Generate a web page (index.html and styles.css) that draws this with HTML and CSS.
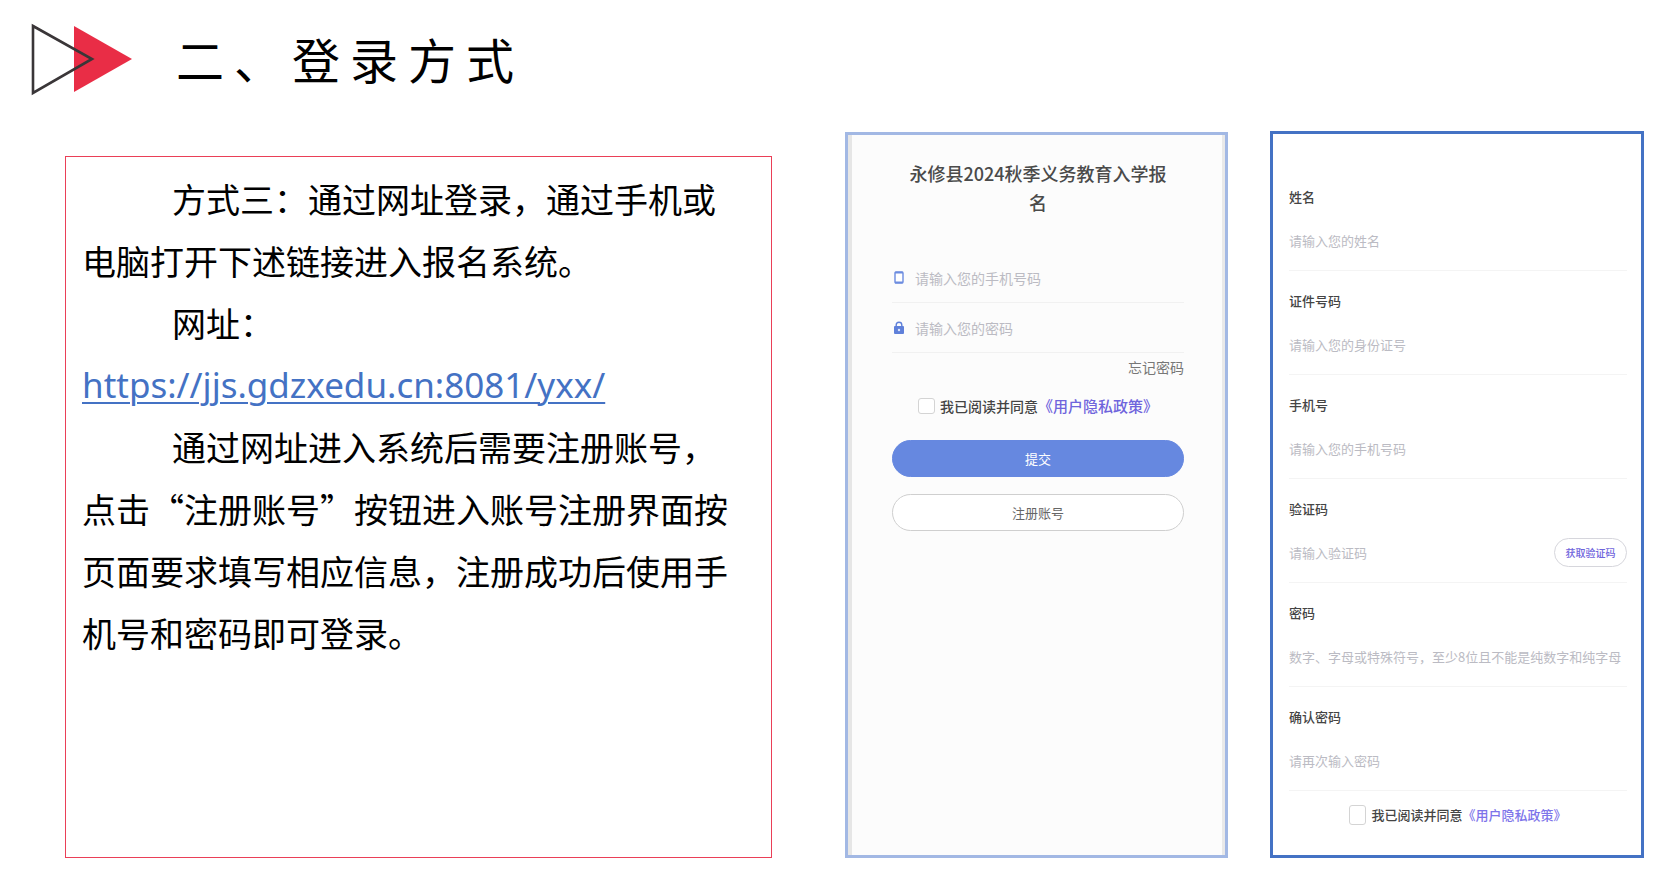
FILE: index.html
```html
<!DOCTYPE html>
<html lang="zh-CN">
<head>
<meta charset="utf-8">
<meta name="viewport" content="width=device-width, initial-scale=1">
<title>二、登录方式</title>
<link rel="stylesheet" href="styles.css">
</head>
<body>
<div class="page">
  <header class="header">
    <svg class="mark" width="104" height="76" viewBox="0 0 104 76" aria-hidden="true">
      <path d="M44 6 L102 39 L44 72 Z" fill="#e92d46"/>
      <path d="M3 6 L62 39 L3 73 Z" fill="none" stroke="#3a3638" stroke-width="2.6"/>
    </svg>
    <h1 class="title">二、登录方式</h1>
  </header>
  <main class="columns">
    <section class="note">
      <p>方式三：通过网址登录，通过手机或电脑打开下述链接进入报名系统。</p>
      <p>网址：</p>
      <a class="url" href="https://jjs.gdzxedu.cn:8081/yxx/">https://jjs.gdzxedu.cn:8081/yxx/</a>
      <p>通过网址进入系统后需要注册账号，点击“注册账号”按钮进入账号注册界面按页面要求填写相应信息，注册成功后使用手机号和密码即可登录。</p>
    </section>

    <form class="login">
      <h2 class="login-title">永修县2024秋季义务教育入学报名</h2>
      <div class="login-row">
        <svg width="14" height="16" viewBox="0 0 14 16" aria-hidden="true"><rect x="3" y="2" width="8" height="11" rx="1" fill="#fff" stroke="#6c8ce0" stroke-width="1.4"/><path d="M3 2.6h8M3 12.4h8" stroke="#6c8ce0" stroke-width="1.8"/></svg>
        <input class="field" type="tel" aria-label="手机号码" placeholder="请输入您的手机号码">
      </div>
      <div class="login-row">
        <svg width="14" height="16" viewBox="0 0 14 16" aria-hidden="true"><path d="M4.2 7V5a2.8 2.8 0 0 1 5.6 0v2" fill="none" stroke="#5f80da" stroke-width="1.4"/><rect x="2" y="6" width="10" height="8" rx="1" fill="#5f80da"/><circle cx="7" cy="10" r="1.2" fill="#dfe6fa"/></svg>
        <input class="field" type="password" aria-label="密码" placeholder="请输入您的密码">
      </div>
      <a class="forgot" href="#forgot">忘记密码</a>
      <div class="agree">
        <input class="tick" type="checkbox" id="agree-login">
        <label for="agree-login">我已阅读并同意</label><a class="policy" href="#policy">《用户隐私政策》</a>
      </div>
      <button class="pill primary" type="submit">提交</button>
      <button class="pill" type="button">注册账号</button>
    </form>

    <form class="register">
      <div class="item">
        <label for="name">姓名</label>
        <div class="line"><input class="field" id="name" type="text" placeholder="请输入您的姓名"></div>
      </div>
      <div class="item">
        <label for="idno">证件号码</label>
        <div class="line"><input class="field" id="idno" type="text" placeholder="请输入您的身份证号"></div>
      </div>
      <div class="item">
        <label for="phone">手机号</label>
        <div class="line"><input class="field" id="phone" type="tel" placeholder="请输入您的手机号码"></div>
      </div>
      <div class="item">
        <label for="code">验证码</label>
        <div class="line"><input class="field" id="code" type="text" placeholder="请输入验证码"><button class="get-code" type="button">获取验证码</button></div>
      </div>
      <div class="item">
        <label for="pwd">密码</label>
        <div class="line"><input class="field" id="pwd" type="password" placeholder="数字、字母或特殊符号，至少8位且不能是纯数字和纯字母"></div>
      </div>
      <div class="item">
        <label for="pwd2">确认密码</label>
        <div class="line"><input class="field" id="pwd2" type="password" placeholder="请再次输入密码"></div>
      </div>
      <div class="agree">
        <input class="tick" type="checkbox" id="agree-reg">
        <label for="agree-reg">我已阅读并同意</label><a class="policy" href="#policy">《用户隐私政策》</a>
      </div>
    </form>
  </main>
</div>
</body>
</html>
```
FILE: styles.css
```css
* { box-sizing: border-box; }

body {
  margin: 0;
  background: #fff;
  color: #000;
  font-family: "Noto Sans CJK SC", sans-serif;
}

.page {
  display: flex;
  flex-direction: column;
  min-height: 100vh;
}

.header {
  display: flex;
  align-items: center;
  gap: 42px;
  padding: 20px 30px 35px;
}

.mark { flex: none; }

.title {
  margin: 0;
  font-size: 48px;
  font-weight: 400;
  line-height: 72px;
  letter-spacing: 10px;
}

.columns {
  flex: 1;
  display: grid;
  grid-template-columns: 738fr 383fr 374fr;
  gap: 42px;
  padding: 0 17px 21px 65px;
}

/* Instruction text */
.note {
  margin: 25px 31px 0 0;
  padding: 11px 22px 11px 16px;
  border: 1px solid #ea3f57;
  font-size: 34px;
  line-height: 62px;
}

.note p {
  margin: 0;
  text-indent: 90px;
}

.url {
  display: block;
  color: #4472c4;
  font-family: "Noto Sans", sans-serif;
  font-size: 35px;
  text-decoration-thickness: 2px;
  text-underline-offset: 4px;
}

/* Shared form parts */
.field {
  flex: 1;
  min-width: 0;
  padding: 0;
  border: 0;
  outline: 0;
  background: transparent;
  color: #444;
  font: inherit;
}

.field::placeholder {
  color: #bbbbc3;
  opacity: 1;
}

.agree {
  display: flex;
  align-items: center;
  justify-content: center;
  color: #444;
  font-weight: 500;
}

.tick {
  appearance: none;
  width: 17px;
  height: 16px;
  margin: 0 5px 0 0;
  border: 1px solid #d4d4d4;
  border-radius: 3px;
  background: #fff;
}

.tick:checked { background: #6688e0; }

.policy {
  color: #6f64dc;
  text-decoration: none;
}

/* Login screen */
.login {
  display: flex;
  flex-direction: column;
  margin-top: 1px;
  padding: 24px 41px 24px 44px;
  border: 3px solid #a2b8e4;
  background: #fcfcfc;
  box-shadow: inset 4px 0 #e6e6e6, inset -3px 0 #e9e9e9;
  color: #777;
  font-size: 14px;
}

.login-title {
  margin: 0 12px 36px;
  color: #4a4a4a;
  font-size: 18px;
  font-weight: 500;
  line-height: 29px;
  text-align: center;
}

.login-row {
  display: flex;
  align-items: center;
  gap: 9px;
  height: 50px;
  border-bottom: 1px solid #f1f1f1;
}

.forgot {
  align-self: flex-end;
  margin-top: 4px;
  color: #777;
  line-height: 20px;
  text-decoration: none;
}

.login .agree {
  margin: 19px 0 24px;
  line-height: 20px;
}

.login .policy { font-size: 15px; }

.pill {
  height: 37px;
  margin-bottom: 17px;
  border: 1px solid #cfcfcf;
  border-radius: 19px;
  background: #fff;
  color: #666;
  font: inherit;
  font-size: 13px;
}

.primary {
  border-color: #6688e0;
  background: #6688e0;
  color: #fff;
}

/* Registration screen */
.register {
  padding: 33px 14px 20px 16px;
  border: 3px solid #4472c4;
  background: #fff;
  font-size: 13px;
}

.item {
  height: 104px;
  padding-top: 20px;
  border-bottom: 1px solid #f4f4f4;
  color: #444;
}

.item label {
  display: block;
  font-weight: 500;
  line-height: 20px;
}

.line {
  display: flex;
  align-items: center;
  height: 30px;
  margin-top: 18px;
}

.get-code {
  width: 73px;
  height: 29px;
  padding: 0;
  border: 1px solid #d6d6dc;
  border-radius: 15px;
  background: #fff;
  color: #6f64dc;
  font: inherit;
  font-size: 10px;
  font-weight: 500;
}

.register .agree {
  padding-top: 14px;
  line-height: 20px;
}

.register .tick { height: 20px; }

.register .policy { color: #7d74ea; }
```
